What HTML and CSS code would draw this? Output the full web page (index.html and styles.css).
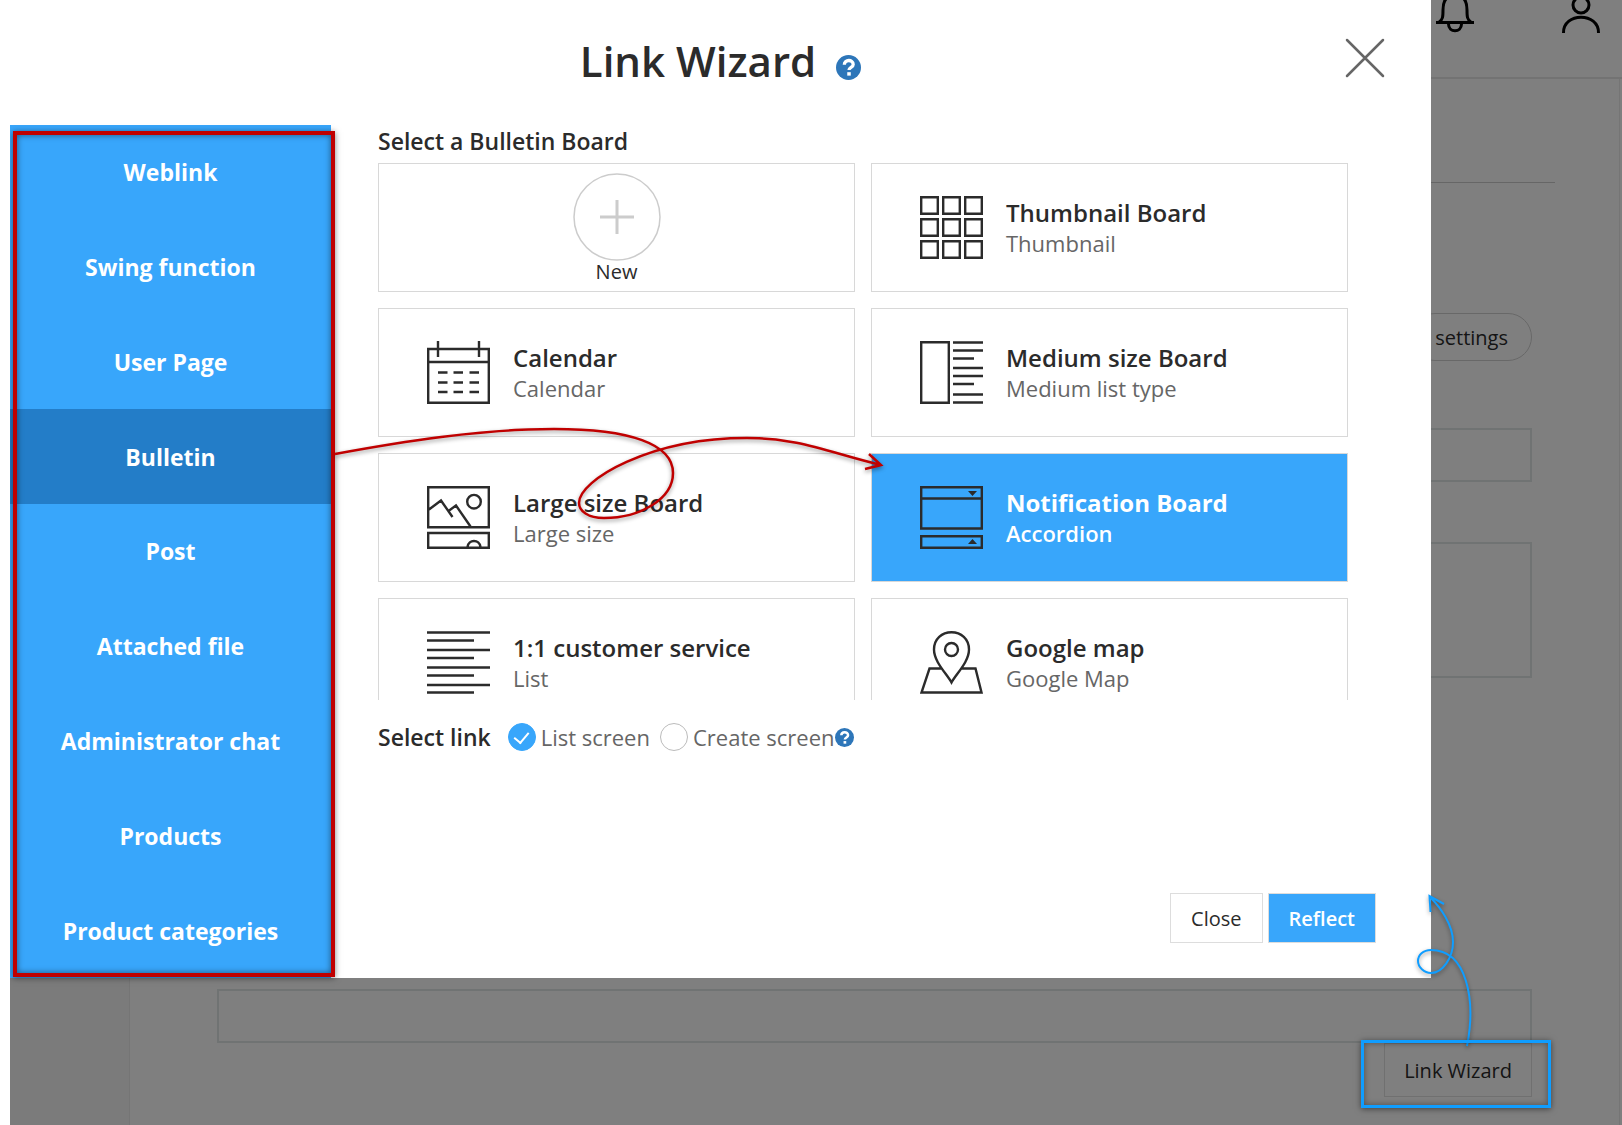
FILE: index.html
```html
<!DOCTYPE html>
<html lang="en">
<head>
    <meta charset="UTF-8">
    <meta name="viewport" content="width=device-width, initial-scale=1.0">
    <title>Link Wizard</title>
    <link rel="stylesheet" href="styles.css">
</head>
<body>
    <div class="page">
        <header class="topbar">
            <button class="icon-btn" aria-label="Notifications">
                <svg width="40" height="48" viewBox="0 0 40 48" fill="none" stroke="#000" stroke-width="3">
                    <path d="M1 36.500H39M4 36C8 34 8 30 8 24C8 14 12 9 20 9S32 14 32 24C32 30 32 34 36 36M13.500 38C13.500 47 26.500 47 26.500 38"/>
                </svg>
            </button>
            <button class="icon-btn" aria-label="Account">
                <svg width="40" height="48" viewBox="0 0 40 48" fill="none" stroke="#000" stroke-width="3">
                    <circle cx="20" cy="19" r="8"/>
                    <path d="M2.500 47C2 26 38 26 37.500 47"/>
                </svg>
            </button>
        </header>
        <div class="columns">
            <aside class="menu"></aside>
            <main class="panel">
                <hr>
                <form class="form">
                    <button type="button" class="pill">settings</button>
                    <input type="text" class="field" aria-label="Name">
                    <textarea class="field area" aria-label="Description"></textarea>
                    <input type="text" class="field link-field" aria-label="Link">
                    <button type="button" class="wizard-btn">Link Wizard</button>
                </form>
            </main>
        </div>

        <div class="dim"></div>

        <div class="modal" role="dialog" aria-labelledby="modal-title">
            <div class="modal-header">
                <h1 id="modal-title">Link Wizard</h1>
                <a href="#" class="help" aria-label="Help">
                    <svg width="25" height="25" viewBox="0 0 24 24"><circle cx="12" cy="12" r="12" fill="#2d76b9"/><path d="M8 9.300C8 4 16.500 4 16.500 9C16.500 12 12.500 11.800 12.500 14.500" fill="none" stroke="#fff" stroke-width="3.200"/><path d="M10.800 16.500h3.400v3.300h-3.400z" fill="#fff"/></svg>
                </a>
                <button class="modal-x" aria-label="Close window">
                    <svg width="40" height="40" viewBox="0 0 40 40" fill="none" stroke="#666" stroke-width="2.500" stroke-linecap="round"><path d="M2 2L38 38M38 2L2 38"/></svg>
                </button>
            </div>

            <div class="modal-body">
                <nav class="tabs">
                    <a href="#">Weblink</a>
                    <a href="#">Swing function</a>
                    <a href="#">User Page</a>
                    <a href="#" class="active">Bulletin</a>
                    <a href="#">Post</a>
                    <a href="#">Attached file</a>
                    <a href="#">Administrator chat</a>
                    <a href="#">Products</a>
                    <a href="#">Product categories</a>
                    <span class="mark mark-red"></span>
                </nav>

                <section class="content">
                    <h2>Select a Bulletin Board</h2>
                    <div class="boards">
                        <button class="board board-new">
                            <svg width="88" height="88" viewBox="0 0 88 88" fill="none" stroke="#ccc">
                                <circle cx="44" cy="44" r="43" stroke-width="1.500"/>
                                <path d="M27 44H61M44 27V61" stroke-width="3"/>
                            </svg>
                            <span>New</span>
                        </button>
                        <button class="board">
                            <svg class="icon" viewBox="0 0 63 63">
                                <path d="M1.200 1.200h16.600v16.600H1.200zM23.200 1.200h16.600v16.600H23.200zM45.200 1.200h16.600v16.600H45.200zM1.200 23.200h16.600v16.600H1.200zM23.200 23.200h16.600v16.600H23.200zM45.200 23.200h16.600v16.600H45.200zM1.200 45.200h16.600v16.600H1.200zM23.200 45.200h16.600v16.600H23.200zM45.200 45.200h16.600v16.600H45.200z"/>
                            </svg>
                            <span class="text"><b>Thumbnail Board</b><small>Thumbnail</small></span>
                        </button>
                        <button class="board">
                            <svg class="icon" viewBox="0 0 63 63">
                                <path d="M1.200 8h60.600v53.800H1.200zM1.200 21h60.600M11 0v16M52 0v16M11 31.500h9.500M26.500 31.500h9.500M42.500 31.500h9.500M11 41.500h9.500M26.500 41.500h9.500M42.500 41.500h9.500M11 51h9.500M26.500 51h9.500M42.500 51h9.500"/>
                            </svg>
                            <span class="text"><b>Calendar</b><small>Calendar</small></span>
                        </button>
                        <button class="board">
                            <svg class="icon" viewBox="0 0 63 63">
                                <path d="M1.200 1.200h27.600v60.600H1.200zM33 1.500h30M33 9.500h30M33 17.500h21M33 27h30M33 35h30M33 43h21M33 53.500h30M33 61.500h30"/>
                            </svg>
                            <span class="text"><b>Medium size Board</b><small>Medium list type</small></span>
                        </button>
                        <button class="board">
                            <svg class="icon" viewBox="0 0 63 63">
                                <path d="M1.200 1.200h60.600v40H1.200zM1.200 47h60.600v14.800H1.200zM2 23.500L14 14.500L25.500 31M21.500 25L29 19.500L43.500 40.500M40.500 61C41.500 53 52.500 53 53.500 61"/>
                                <circle cx="47" cy="15.700" r="6.800"/>
                            </svg>
                            <span class="text"><b>Large size Board</b><small>Large size</small></span>
                        </button>
                        <button class="board selected">
                            <svg class="icon" viewBox="0 0 63 63">
                                <path d="M1.200 1.200h60.600v41.300H1.200zM1.200 12.500h60.600M1.200 50.200h60.600v11.600H1.200z"/>
                                <path d="M48 5h9l-4.500 5zM48 58h9l-4.500-5z" fill="#2b2b2b" stroke="none"/>
                            </svg>
                            <span class="text"><b>Notification Board</b><small>Accordion</small></span>
                        </button>
                        <button class="board">
                            <svg class="icon" viewBox="0 0 63 63">
                                <path d="M0 1.500h63M0 9.500h47M0 19h63M0 27h47M0 36.500h63M0 44.500h47M0 54h63M0 61.500h47"/>
                            </svg>
                            <span class="text"><b>1:1 customer service</b><small>List</small></span>
                        </button>
                        <button class="board">
                            <svg class="icon" viewBox="0 0 63 63">
                                <path d="M31.500 51.500C27 43 14 31 14 18.500C14 8 22 1.200 31.500 1.200S49 8 49 18.500C49 31 36 43 31.500 51.500zM22 37.500H9.500L1.500 61.500H61.500L55.500 37.500H41"/>
                                <circle cx="31.500" cy="18.500" r="6.500"/>
                            </svg>
                            <span class="text"><b>Google map</b><small>Google Map</small></span>
                        </button>
                    </div>

                    <div class="link-row">
                        <span class="link-label">Select link</span>
                        <label><input type="radio" name="screen" checked>List screen</label>
                        <label><input type="radio" name="screen">Create screen</label>
                        <a href="#" class="help help-small" aria-label="Help">
                            <svg width="19" height="19" viewBox="0 0 24 24"><circle cx="12" cy="12" r="12" fill="#2d76b9"/><path d="M8 9.300C8 4 16.500 4 16.500 9C16.500 12 12.500 11.800 12.500 14.500" fill="none" stroke="#fff" stroke-width="3.200"/><path d="M10.800 16.500h3.400v3.300h-3.400z" fill="#fff"/></svg>
                        </a>
                    </div>

                    <div class="actions">
                        <button class="btn">Close</button>
                        <button class="btn btn-primary">Reflect</button>
                    </div>
                </section>
            </div>
        </div>

        <!-- hand drawn arrows over the dialog -->
        <svg class="arrow arrow-red" width="560" height="110" viewBox="330 420 560 110">
            <path d="M335 454C400 442 480 429 554 429C630 429 673 444 673 473C673 499 640 518 604 518C588 518 579 511 579 503C579 480 650 438 747 438C800 438 830 453 881 465M869 454L881 465L865 469"/>
        </svg>
        <svg class="arrow arrow-blue" width="70" height="160" viewBox="1410 890 70 160">
            <path d="M1467 1046C1476 1000 1467 950 1431 950C1423 950 1418 955 1418 961C1418 967 1424 973 1431 973C1443 973 1453 957 1453 942C1453 925 1441 908 1430 897M1444 904L1429.500 896L1430.500 912"/>
        </svg>
        <span class="mark mark-blue"></span>
    </div>
</body>
</html>
```
FILE: styles.css
```css
* {
    box-sizing: border-box;
}

body {
    margin: 0;
    padding-left: 10px;
    background-color: #fff;
    color: #2b2b2b;
    font-family: "Open Sans", "Noto Sans", sans-serif;
    font-size: 20px;
}

button,
input,
textarea {
    font: inherit;
    color: inherit;
    background: none;
    border: none;
    padding: 0;
    margin: 0;
}

button {
    cursor: pointer;
}

a {
    color: inherit;
    text-decoration: none;
}

svg {
    display: block;
}

.page {
    position: relative;
    display: flex;
    flex-direction: column;
    min-height: 100vh;
    overflow: hidden;
}

/* page behind the dialog */
.topbar {
    display: flex;
    justify-content: flex-end;
    gap: 86px;
    height: 79px;
    padding-right: 21px;
    border-bottom: 2px solid #e6e6e6;
}

.icon-btn {
    height: 48px;
    margin-top: -14px;
}

.columns {
    display: flex;
    flex: 1;
}

.menu {
    width: 119px;
    background-color: #f7f7f7;
}

.panel {
    flex: 1;
    margin-right: 2px;
    padding: 103px 64px 0 87px;
    border: solid #eaeaea;
    border-width: 0 1px;
}

.panel hr {
    margin: 0;
    border: none;
    border-top: 1px solid #ccc;
}

.form {
    display: flex;
    flex-direction: column;
    align-items: flex-end;
    padding-right: 23px;
}

.pill {
    height: 48px;
    margin-top: 130px;
    padding: 0 23px;
    border: 1px solid #d0d0d0;
    border-radius: 24px;
}

.field {
    width: 100%;
    height: 54px;
    margin-top: 67px;
    padding: 0 16px;
    border: 2px solid #e0e6e7;
}

.area {
    height: 136px;
    margin-top: 60px;
    resize: none;
}

.link-field {
    margin-top: 311px;
}

.wizard-btn {
    height: 54px;
    padding: 0 19px;
    border: 1px solid #e0e0e0;
}

.dim {
    position: absolute;
    inset: 0;
    background-color: rgba(0, 0, 0, 0.5);
}

/* dialog */
.modal {
    position: absolute;
    top: 0;
    left: 0;
    right: 191px;
    display: flex;
    flex-direction: column;
    background-color: #fff;
}

.modal-header {
    display: flex;
    justify-content: center;
    align-items: center;
    gap: 20px;
    height: 125px;
    padding-bottom: 4px;
}

.modal-header h1 {
    margin: 0;
    font-size: 42px;
    font-weight: 600;
    line-height: 56px;
}

.modal-header .help {
    padding-top: 14px;
}

.modal-x {
    position: absolute;
    top: 38px;
    right: 46px;
}

.modal-body {
    display: flex;
}

.tabs {
    position: relative;
    display: grid;
    grid-auto-rows: 1fr;
    width: 321px;
    height: 853px;
    background-color: #38a6fb;
}

.tabs a {
    display: flex;
    justify-content: center;
    align-items: center;
    color: #fff;
    font-size: 23px;
    font-weight: 700;
}

.tabs .active {
    background-color: #237dc8;
}

.content {
    flex: 1;
    display: flex;
    flex-direction: column;
    padding: 0 55px 35px 47px;
}

.content h2 {
    margin: 0 0 6px;
    font-size: 23px;
    font-weight: 600;
    line-height: 32px;
}

.boards {
    display: grid;
    grid-template-columns: 1fr 1fr;
    grid-auto-rows: 129px;
    gap: 16px;
    height: 537px;
    margin-right: 28px;
    overflow-y: auto;
    scrollbar-width: none;
}

.board {
    display: flex;
    align-items: center;
    gap: 23px;
    padding-left: 48px;
    border: 1px solid #d8d8d8;
    text-align: left;
}

.board-new {
    flex-direction: column;
    justify-content: center;
    gap: 0;
    padding: 0;
    line-height: 22px;
}

.icon {
    width: 63px;
    height: 63px;
    fill: none;
    stroke: #2b2b2b;
    stroke-width: 2.4;
}

.text b,
.text small {
    display: block;
    line-height: 31px;
}

.text b {
    font-size: 24px;
    font-weight: 600;
}

.text small {
    color: #666;
    font-size: 22px;
}

.selected {
    background-color: #38a6fb;
    color: #fff;
}

.selected b {
    font-weight: 700;
}

.selected small {
    color: #fff;
    font-weight: 600;
}

.link-row {
    display: flex;
    align-items: center;
    margin-top: 20px;
    line-height: 34px;
    font-size: 22px;
}

.link-label {
    margin-right: 17px;
    font-size: 23px;
    font-weight: 600;
}

.link-row label {
    display: flex;
    align-items: center;
    gap: 5px;
    color: #666;
}

.link-row label + label {
    margin-left: 10px;
}

.link-row input {
    appearance: none;
    display: flex;
    justify-content: center;
    width: 28px;
    height: 28px;
    border: 1px solid #bbb;
    border-radius: 50%;
}

.link-row input:checked {
    border-color: #38a6fb;
    background-color: #38a6fb;
}

.link-row input:checked::after {
    content: "";
    width: 7px;
    height: 12px;
    margin-top: 5px;
    border: solid #fff;
    border-width: 0 2px 2px 0;
    transform: rotate(40deg);
}

.actions {
    display: flex;
    justify-content: flex-end;
    gap: 5px;
    margin-top: auto;
}

.btn {
    height: 50px;
    padding: 0 20px;
    border: 1px solid #ddd;
}

.btn-primary {
    background-color: #38a6fb;
    color: #fff;
    font-weight: 600;
}

/* highlights */
.mark {
    position: absolute;
    pointer-events: none;
}

.mark-red {
    inset: 6px -4px 1px 3px;
    border: 4px solid #c00000;
    box-shadow: 0 1px 6px rgba(0, 0, 0, 0.5), inset 0 0 6px rgba(0, 0, 0, 0.5);
}

.mark-blue {
    top: 1040px;
    right: 71px;
    width: 190px;
    height: 68px;
    border: 3px solid #0f9dff;
    box-shadow: 0 1px 6px rgba(0, 0, 0, 0.5), inset 0 0 6px rgba(0, 0, 0, 0.4);
}

.arrow {
    position: absolute;
    fill: none;
    stroke-width: 2.5;
    filter: drop-shadow(0 2px 2px rgba(0, 0, 0, 0.4));
    pointer-events: none;
}

.arrow-red {
    top: 420px;
    left: 320px;
    stroke: #c00000;
}

.arrow-blue {
    top: 890px;
    right: 142px;
    stroke: #0f9dff;
    stroke-width: 2;
}
```
